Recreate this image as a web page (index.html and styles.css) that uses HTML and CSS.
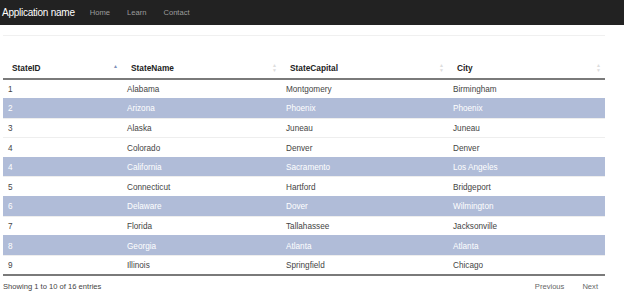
FILE: index.html
```html
<!DOCTYPE html>
<html>
<head>
<meta charset="utf-8">
<link rel="stylesheet" href="styles.css">
</head>
<body>
<div class="navbar">
  <span class="brand">Application name</span>
  <span class="nav-link">Home</span>
  <span class="nav-link">Learn</span>
  <span class="nav-link">Contact</span>
</div>
<div class="container">
  <div class="rule"></div>
  <table class="grid">
    <colgroup>
      <col class="c1"><col class="c2"><col class="c3"><col class="c4">
    </colgroup>
    <thead>
      <tr>
        <th><span>StateID</span><span class="sort asc">&#9650;</span></th>
        <th><span>StateName</span><span class="sort both"><i>&#9650;</i><i>&#9660;</i></span></th>
        <th><span>StateCapital</span><span class="sort both"><i>&#9650;</i><i>&#9660;</i></span></th>
        <th><span>City</span><span class="sort both"><i>&#9650;</i><i>&#9660;</i></span></th>
      </tr>
    </thead>
    <tbody>
      <tr><td>1</td><td>Alabama</td><td>Montgomery</td><td>Birmingham</td></tr>
      <tr class="hl"><td>2</td><td>Arizona</td><td>Phoenix</td><td>Phoenix</td></tr>
      <tr><td>3</td><td>Alaska</td><td>Juneau</td><td>Juneau</td></tr>
      <tr><td>4</td><td>Colorado</td><td>Denver</td><td>Denver</td></tr>
      <tr class="hl"><td>4</td><td>California</td><td>Sacramento</td><td>Los Angeles</td></tr>
      <tr><td>5</td><td>Connecticut</td><td>Hartford</td><td>Bridgeport</td></tr>
      <tr class="hl"><td>6</td><td>Delaware</td><td>Dover</td><td>Wilmington</td></tr>
      <tr><td>7</td><td>Florida</td><td>Tallahassee</td><td>Jacksonville</td></tr>
      <tr class="hl"><td>8</td><td>Georgia</td><td>Atlanta</td><td>Atlanta</td></tr>
      <tr><td>9</td><td>Illinois</td><td>Springfield</td><td>Chicago</td></tr>
    </tbody>
  </table>
  <div class="footer">
    <span class="info">Showing 1 to 10 of 16 entries</span>
    <div class="pager">
      <span class="pg">Previous</span>
      <span class="pg">Next</span>
    </div>
  </div>
</div>
</body>
</html>
```
FILE: styles.css
```css
* { box-sizing: border-box; }
html, body { margin: 0; padding: 0; background: #fff; }
body {
  font-family: "Liberation Sans", Arial, sans-serif;
  font-size: 8.2px;
  color: #333;
  width: 624px;
  height: 305px;
  overflow: hidden;
}
.navbar {
  height: 25px;
  background: #222;
  display: flex;
  align-items: center;
  padding-left: 2px;
}
.brand {
  color: #fff;
  font-size: 10px;
  letter-spacing: -0.25px;
  margin-right: 15px;
}
.nav-link {
  color: #9d9d9d;
  font-size: 7.6px;
  margin-right: 17px;
}
.container {
  padding: 0 19px 0 3px;
}
.rule {
  margin-top: 10px;
  height: 1px;
  background: #f0f0f0;
}
.grid {
  margin-top: 22px;
  width: 602px;
  border-collapse: collapse;
  table-layout: fixed;
}
.c1 { width: 119px; }
.c2 { width: 159px; }
.c3 { width: 167px; }
.c4 { width: 157px; }
th {
  height: 21px;
  text-align: left;
  font-weight: bold;
  color: #222;
  padding: 0 4px 0 9px;
  border-bottom: 2px solid #7a7a7a;
  position: relative;
  font-size: 8.3px;
}
th span:first-child { display: inline-block; }
.sort {
  position: absolute;
  right: 4px;
  top: 5px;
  font-size: 5px;
  line-height: 5px;
}
.sort.asc { color: #8090b8; top: 6px; }
.sort.both { color: #ddd; display: flex; flex-direction: column; top: 5px; }
.sort.both i { font-style: normal; }
td {
  height: 19.6px;
  padding: 1px 5px 0 5px;
  border-top: 1px solid #eee;
  color: #444;
  white-space: nowrap;
}
tbody tr:first-child td { border-top: none; }
tr.hl td {
  background: #b0bcd8;
  color: #fff;
  border-top: 1px solid #b0bcd8;
}
tbody tr:last-child td { border-bottom: 2px solid #7a7a7a; }
.footer {
  width: 602px;
  display: flex;
  justify-content: space-between;
  align-items: center;
  margin-top: 6px;
  color: #444;
  font-size: 7.6px;
}
.pager { display: flex; }
.pg {
  color: #666;
  padding: 0 9px;
}
.pg:last-child { padding-right: 7px; }
```
